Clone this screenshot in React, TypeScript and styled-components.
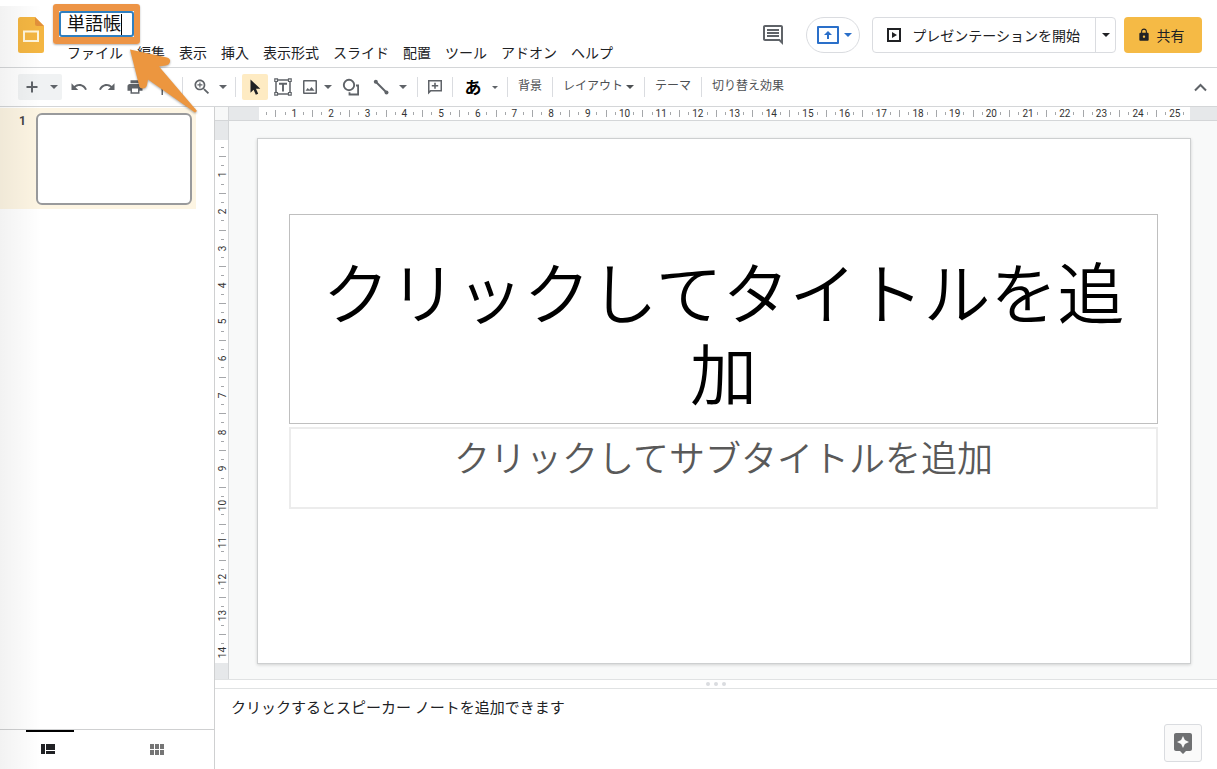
import React from 'react';
import styled, { createGlobalStyle, css } from 'styled-components';

const GlobalStyle = createGlobalStyle`
  *, *::before, *::after { box-sizing: border-box; }
  body {
    margin: 0;
    background: #fff;
    color: #202124;
    font-family: Roboto, "Noto Sans CJK JP", sans-serif;
    font-size: 14px;
  }
  button, input, textarea {
    font: inherit;
    color: inherit;
    border: 0;
    padding: 0;
    margin: 0;
    background: none;
    outline: 0;
  }
  svg { display: block; flex: none; }
`;

const line = '#d4d6d8';
const iconGrey = '#5f6368';

/* ---------- page frame ---------- */

const Page = styled.div`
  position: relative;
  display: flex;
  flex-direction: column;
  height: 100vh;
  min-height: 480px;
  overflow: hidden;
`;

const EdgeShade = styled.div`
  position: absolute;
  z-index: 5;
  top: 6px;
  bottom: 0;
  left: 0;
  width: 42px;
  pointer-events: none;
  background: linear-gradient(to right, rgba(0, 0, 0, 0.05), rgba(0, 0, 0, 0));
`;

/* ---------- header ---------- */

const Header = styled.header`
  position: relative;
  z-index: 3;
  display: flex;
  align-items: flex-start;
  height: 68px;
  padding: 0 15px 0 18px;
  border-bottom: 1px solid ${line};
`;

const Logo = styled.a`
  margin: 17px 15px 0 0;
`;

const TitleColumn = styled.div`
  padding-top: 11px;
`;

const TitleBox = styled.div`
  position: relative;
  z-index: 2;
  display: inline-flex;
  align-items: center;
  height: 26px;
  padding: 0 10px 0 6px;
  border: 2px solid #2f7fc0;
  border-radius: 3px;
  background: #fff;
  vertical-align: top;
`;

const TitleInput = styled.input`
  width: 54px;
  height: 22px;
  font-size: 18px;
  line-height: 22px;
  color: #111;
`;

const TextCaret = styled.span`
  width: 1px;
  height: 21px;
  background: #000;
`;

const Highlight = styled.span`
  position: absolute;
  inset: -9px -8px;
  border: solid #ed9445;
  border-width: 7px 6px;
  border-radius: 3px;
  box-shadow: 0 1px 2px rgba(0, 0, 0, 0.3);
`;

const Arrow = styled.svg`
  position: absolute;
  left: 63px;
  top: 31px;
  filter: drop-shadow(0 1px 1px rgba(0, 0, 0, 0.35));
`;

const MenuBar = styled.nav`
  display: flex;
  margin: 1px 0 0 1px;
`;

const MenuItem = styled.button`
  padding: 0 7px;
  height: 30px;
  line-height: 30px;
  white-space: nowrap;
`;

const HeaderActions = styled.div`
  display: flex;
  align-items: center;
  height: 36px;
  margin: 17px 0 0 auto;
`;

const CommentsButton = styled.button`
  margin-right: 21px;
  color: ${iconGrey};
`;

const UploadPill = styled.button`
  display: flex;
  align-items: center;
  justify-content: center;
  gap: 5px;
  width: 54px;
  height: 36px;
  margin-right: 12px;
  padding-left: 3px;
  border: 1px solid #dadce0;
  border-radius: 18px;
  color: #2a6fc9;
`;

const PresentGroup = styled.div`
  display: flex;
  height: 36px;
  margin-right: 8px;
  border: 1px solid #dadce0;
  border-radius: 4px;
`;

const PresentButton = styled.button`
  display: flex;
  align-items: center;
  gap: 10px;
  padding: 0 15px 1px 13px;
  white-space: nowrap;
`;

const PresentMenu = styled.button`
  display: flex;
  align-items: center;
  justify-content: center;
  width: 20px;
  border-left: 1px solid #dadce0;
`;

const ShareButton = styled.button`
  display: flex;
  align-items: center;
  justify-content: center;
  gap: 6px;
  width: 78px;
  height: 36px;
  padding: 0 5px 1px 0;
  border-radius: 4px;
  background: #f5ba45;
`;

/* ---------- toolbar ---------- */

const Toolbar = styled.div`
  display: flex;
  align-items: center;
  height: 39px;
  padding: 0 3px 0 18px;
  border-bottom: 1px solid ${line};
  color: ${iconGrey};
  font-size: 12px;
`;

const NewSlide = styled.div`
  display: flex;
  width: 44px;
  height: 26px;
  margin-right: 3px;
  border-radius: 2px;
  background: #f0f2f3;
`;

const Tool = styled.button<{ $w?: number; $active?: boolean; $end?: boolean }>`
  display: flex;
  align-items: center;
  justify-content: center;
  flex: none;
  width: ${(p) => p.$w ?? 28}px;
  height: 26px;
  ${(p) => p.$end && css`margin-left: auto;`}
  ${(p) =>
    p.$active &&
    css`
      width: 26px;
      margin: 0 1px;
      border-radius: 2px;
      background: #feebc3;
      color: #202124;
    `}
`;

const InputMode = styled.span`
  padding-top: 2px;
  font-size: 17px;
  font-weight: 700;
  line-height: 24px;
  color: #000;
`;

const TextTool = styled.button`
  display: flex;
  align-items: center;
  gap: 3px;
  height: 26px;
  padding: 0 5px;
  line-height: 20px;
  white-space: nowrap;
  color: #4d5053;
`;

const TextToolLabel = styled.span`
  padding-bottom: 2px;
`;

const Divider = styled.span`
  flex: none;
  width: 1px;
  height: 20px;
  margin: 0 5px;
  background: #dadce0;
`;

/* ---------- workspace ---------- */

const Workspace = styled.div`
  display: flex;
  flex: 1;
  min-height: 0;
`;

const Sidebar = styled.aside`
  display: flex;
  flex-direction: column;
  flex: none;
  width: 215px;
  border-right: 1px solid #cfd0d1;
`;

const Filmstrip = styled.ol`
  flex: 1;
  margin: 0;
  padding: 1px 0 0;
  list-style: none;
`;

const SlideEntry = styled.li`
  display: flex;
  width: 196px;
  padding: 5px 4px 4px 0;
  background: #fdf5e3;
`;

const SlideNumber = styled.span`
  width: 36px;
  padding-right: 10px;
  font-size: 12px;
  font-weight: 700;
  line-height: 16px;
  text-align: right;
  color: #444;
`;

const Thumbnail = styled.button`
  flex: 1;
  height: 92px;
  border: 2px solid #999a9c;
  border-radius: 6px;
  background: #fff;
`;

const ViewTabs = styled.div`
  display: flex;
  gap: 61px;
  height: 40px;
  padding-left: 26px;
  border-top: 1px solid #cfd0d1;
`;

const ViewTab = styled.button<{ $selected?: boolean }>`
  display: flex;
  justify-content: center;
  align-items: center;
  width: 48px;
  height: 39px;
  padding: 0 4px 3px 0;
  border-top: 2px solid ${(p) => (p.$selected ? '#000' : 'transparent')};
  color: ${(p) => (p.$selected ? '#202124' : '#757575')};
`;

const Editor = styled.main`
  display: grid;
  grid-template: 14px minmax(0, 1fr) auto / 14px minmax(0, 1fr);
  flex: 1;
  min-width: 0;
`;

const Corner = styled.div`
  border-right: 1px solid ${line};
  border-bottom: 1px solid ${line};
  background: #f7f8f8;
`;

const HorizontalRuler = styled.div`
  display: flex;
  padding: 0 27px 0 30px;
  border-bottom: 1px solid ${line};
  background: #e6e8ea;
`;

const VerticalRuler = styled.div`
  display: flex;
  padding: 19px 0 16px;
  border-right: 1px solid ${line};
  background: #e6e8ea;
`;

const Scale = styled.div<{ $vertical?: boolean }>`
  display: flex;
  flex: 1;
  flex-direction: ${(p) => (p.$vertical ? 'column' : 'row')};
  min-width: 0;
  min-height: 0;
  padding-left: ${(p) => (p.$vertical ? 2 : 0)}px;
  background: #fff;
  font-size: 10px;
  line-height: 13px;
  color: #333;
`;

const Slot = styled.span<{ $grow?: number }>`
  display: flex;
  align-items: center;
  justify-content: center;
  flex: ${(p) => p.$grow ?? 1} 1 0;
  min-width: 0;
  min-height: 0;
`;

const Tick = styled.i<{ $vertical?: boolean; $long?: boolean }>`
  flex: none;
  width: ${(p) => (p.$vertical ? (p.$long ? 7 : 3) : 1)}px;
  height: ${(p) => (p.$vertical ? 1 : p.$long ? 7 : 3)}px;
  background: #a5a7aa;
`;

const RulerLabel = styled.span<{ $vertical?: boolean }>`
  flex: none;
  ${(p) => p.$vertical && css`transform: rotate(-90deg);`}
`;

const Canvas = styled.section`
  display: flex;
  padding: 17px 26px 15px 28px;
  background: #f8f9f9;
`;

const Slide = styled.div`
  display: flex;
  flex-direction: column;
  flex: 1;
  gap: 3px;
  min-width: 0;
  padding: 75px 32px 0 31px;
  border: 1px solid #cdcfd0;
  background: #fff;
  box-shadow: 0 1px 3px rgba(0, 0, 0, 0.16);
`;

const TitleHolder = styled.div`
  display: flex;
  align-items: flex-end;
  justify-content: center;
  height: 210px;
  padding: 0 30px 12px;
  border: 1px solid #bfbfbf;
`;

const SlideTitle = styled.h1`
  margin: 0;
  font-size: 67px;
  font-weight: 350;
  font-family: "Noto Sans CJK JP", sans-serif;
  line-height: 81px;
  text-align: center;
  color: #000;
`;

const SubtitleHolder = styled.div`
  height: 82px;
  padding-top: 5px;
  border: 2px solid #ececec;
`;

const SlideSubtitle = styled.p`
  margin: 0;
  font-size: 36px;
  font-weight: 350;
  font-family: "Noto Sans CJK JP", sans-serif;
  line-height: 44px;
  text-align: center;
  color: #595959;
`;

const NotesPanel = styled.section`
  grid-column: 1 / -1;
`;

const Splitter = styled.div`
  display: flex;
  align-items: center;
  justify-content: center;
  gap: 4px;
  height: 10px;
  border-top: 1px solid #e0e2e3;
  border-bottom: 1px solid #e0e2e3;
`;

const GripDot = styled.i`
  width: 4px;
  height: 4px;
  border-radius: 2px;
  background: #dadce0;
`;

const NotesRow = styled.div`
  display: flex;
  align-items: flex-end;
  height: 80px;
  padding: 0 15px 7px 16px;
`;

const Notes = styled.textarea`
  display: block;
  flex: 1;
  height: 65px;
  resize: none;
  overflow: hidden;
  font-size: 15px;
  line-height: 22px;
  color: #202124;
`;

const ExploreButton = styled.button`
  display: flex;
  align-items: center;
  justify-content: center;
  width: 38px;
  height: 38px;
  border: 1px solid #dadce0;
  border-radius: 3px;
  background: #fafafa;
  color: #6f7072;
`;

/* ---------- icons ---------- */

const Glyph = ({ d, size = 24, box = 24 }: { d: string; size?: number; box?: number }) => (
  <svg width={size} height={size} viewBox={`0 0 ${box} ${box}`} fill="currentColor" aria-hidden="true">
    <path fillRule="evenodd" d={d} />
  </svg>
);

const Down = ({ w = 8 }: { w?: number }) => (
  <svg width={w} height={w / 2} viewBox="0 0 8 4" fill="currentColor" aria-hidden="true">
    <path d="M0 0h8L4 4z" />
  </svg>
);

const paths = {
  plus: 'M8 3.5h2V8h4.5v2H10v4.500H8V10H3.500V8H8z',
  undo: 'M12.5 8c-2.65 0-5.05.99-6.9 2.6L2 7v9h9l-3.62-3.62c1.39-1.16 3.16-1.88 5.12-1.88 3.54 0 6.55 2.31 7.6 5.5l2.37-.78C21.08 11.03 17.15 8 12.5 8z',
  redo: 'M18.4 10.6C16.55 8.99 14.15 8 11.5 8c-4.65 0-8.58 3.03-9.96 7.22L3.9 16c1.05-3.19 4.05-5.5 7.6-5.5 1.95 0 3.73.72 5.12 1.88L13 16h9V7l-3.6 3.6z',
  print: 'M19 8H5c-1.66 0-3 1.34-3 3v6h4v4h12v-4h4v-6c0-1.66-1.34-3-3-3zm-3 11H8v-5h8v5zm3-7c-.55 0-1-.45-1-1s.45-1 1-1 1 .45 1 1-.45 1-1 1zm-1-9H6v4h12V3z',
  zoom: 'M15.5 14h-.79l-.28-.27C15.41 12.59 16 11.11 16 9.5 16 5.91 13.09 3 9.5 3S3 5.91 3 9.5 5.91 16 9.5 16c1.61 0 3.09-.59 4.23-1.57l.27.28v.79l5 4.99L20.49 19l-4.99-5zm-6 0C7.01 14 5 11.99 5 9.5S7.01 5 9.5 5 14 7.01 14 9.5 11.99 14 9.5 14zM12.5 10.2h-2.3v2.3H8.8v-2.3H6.5V8.8h2.3V6.5h1.4v2.3h2.3z',
  pointer: 'M4.5 1.5v13.2l3.1-3 2.2 5 2.4-1-2.2-5h4.3z',
  comments: 'M21.99 4c0-1.1-.89-2-1.99-2H4c-1.1 0-2 .9-2 2v12c0 1.1.9 2 2 2h14l4 4-.01-18zM20 4v13.17L18.83 16H4V4h16zM6 12h12v2H6zM6 9h12v2H6zM6 6h12v2H6z',
  lock: 'M18 8h-1V6c0-2.76-2.24-5-5-5S7 3.24 7 6v2H6c-1.1 0-2 .9-2 2v10c0 1.1.9 2 2 2h12c1.1 0 2-.9 2-2V10c0-1.1-.9-2-2-2zm-6 9c-1.1 0-2-.9-2-2s.9-2 2-2 2 .9 2 2-.9 2-2 2zm3.1-9H8.9V6c0-1.71 1.39-3.1 3.1-3.1 1.71 0 3.1 1.39 3.1 3.1v2z',
  image: 'M3 2h12a1 1 0 0 1 1 1v12a1 1 0 0 1-1 1H3a1 1 0 0 1-1-1V3a1 1 0 0 1 1-1zm.5 1.5v11h11v-11zM4.5 12.8l2.2-2.9 1.6 1.9 2.2-2.9 3 3.9z',
  addComment: 'M2 2h14v11.5H5L2 16.5zM3.5 3.5v9.2l.8-.7h10.2V3.5zM8.2 4.7h1.6v2.3h2.4v1.5H9.8v2.3H8.2V8.5H5.8V7h2.4z',
  present: 'M1 1h14v14H1zM3 3v10h10V3zM6 5l5 3-5 3z',
  upload: 'M1 0h20a1 1 0 0 1 1 1v16a1 1 0 0 1-1 1H1a1 1 0 0 1-1-1V1a1 1 0 0 1 1-1zM2 2v14h18V2zM11 5l4 4h-3v4h-2V9H7z',
  explore: 'M19 2H5c-1.1 0-2 .9-2 2v14c0 1.1.9 2 2 2h4l3 3 3-3h4c1.1 0 2-.9 2-2V4c0-1.1-.9-2-2-2zm-5.12 10.88L12 17l-1.88-4.12L6 11l4.12-1.88L12 5l1.88 4.12L18 11l-4.12 1.88z',
};

const SlidesLogo = () => (
  <svg width="26" height="36" viewBox="0 0 26 36" aria-hidden="true">
    <path d="M2.5 0H17l9 9v24.5a2.5 2.5 0 0 1-2.5 2.5h-21A2.5 2.5 0 0 1 0 33.5v-31A2.5 2.5 0 0 1 2.5 0z" fill="#f4b642" />
    <path d="M17 0l9 9h-7a2 2 0 0 1-2-2z" fill="#e2903a" />
    <path d="M6 14.5h14v9.5H6z" fill="none" stroke="#fff6dc" strokeWidth="2" />
  </svg>
);

const TextBoxIcon = () => (
  <svg width="18" height="18" viewBox="0 0 18 18" fill="none" stroke="currentColor" aria-hidden="true">
    <path d="M4 2h10M4 16h10M2 4v10M16 4v10" strokeWidth="1.5" />
    <path d="M.8.8h2.7v2.7H.8zM14.5.8h2.7v2.7h-2.7zM.8 14.5h2.7v2.7H.8zM14.5 14.5h2.7v2.7h-2.7z" strokeWidth="1.2" />
    <path d="M5 5.7h8M9 5.7v7.8" strokeWidth="1.9" />
  </svg>
);

const ShapeIcon = () => (
  <svg width="18" height="18" viewBox="0 0 18 18" fill="none" stroke="currentColor" aria-hidden="true">
    <circle cx="7" cy="7" r="5.2" strokeWidth="1.9" />
    <path d="M14 7.5h2.1v9H7.5v-2.3" strokeWidth="1.8" />
  </svg>
);

const LineIcon = () => (
  <svg width="18" height="18" viewBox="0 0 18 18" aria-hidden="true">
    <path d="M4 4l10.5 10.5" stroke="currentColor" strokeWidth="2" />
    <circle cx="3.8" cy="3.8" r="2" fill="currentColor" />
    <circle cx="14.5" cy="14.5" r="2" fill="currentColor" />
  </svg>
);

const PaintIcon = () => (
  <svg width="18" height="18" viewBox="0 0 18 18" fill="currentColor" aria-hidden="true">
    <path d="M3 2h9v4H3zM13 3.5h2.5V9H8.8v2H7.5V7.8h6.7V4.7H13zM7.5 11H9v6H7.500z" />
  </svg>
);

const FilmstripIcon = () => (
  <svg width="14" height="10" viewBox="0 0 14 10" fill="currentColor" aria-hidden="true">
    <path d="M0 0h4v10H0zM5 0h9v6H5zM5 7h9v3H5z" />
  </svg>
);

const GridIcon = () => (
  <svg width="14" height="11" viewBox="0 0 14 11" fill="currentColor" aria-hidden="true">
    <path d="M0 0h4v5H0zM5 0h4v5H5zM10 0h4v5h-4zM0 6h4v5H0zM5 6h4v5H5zM10 6h4v5h-4z" />
  </svg>
);

const ChevronUp = () => (
  <svg width="13" height="9" viewBox="0 0 13 9" fill="none" aria-hidden="true">
    <path d="M1 7.5L6.5 2 12 7.5" stroke="currentColor" strokeWidth="2" />
  </svg>
);

/* ---------- pieces ---------- */

interface RulerScaleProps {
  slots: number;
  lead: number;
  tail: number;
  vertical?: boolean;
}

/* Four slots make one centimetre; every fourth one carries its number. */
const RulerScale = ({ slots, lead, tail, vertical }: RulerScaleProps) => (
  <Scale $vertical={vertical} aria-hidden="true">
    <Slot $grow={lead} />
    {Array.from({ length: slots }, (_, i) => i + 1).map((n) => (
      <Slot key={n}>
        {n % 4 === 0 ? (
          <RulerLabel $vertical={vertical}>{n / 4}</RulerLabel>
        ) : (
          <Tick $vertical={vertical} $long={n % 4 === 2} />
        )}
      </Slot>
    ))}
    <Slot $grow={tail} />
  </Scale>
);

const menus = ['ファイル', '編集', '表示', '挿入', '表示形式', 'スライド', '配置', 'ツール', 'アドオン', 'ヘルプ'];

export default function App() {
  return (
    <Page>
      <GlobalStyle />
      <Header>
        <Logo href="#" aria-label="スライド ホーム">
          <SlidesLogo />
        </Logo>
        <TitleColumn>
          <TitleBox>
            <TitleInput aria-label="名前を変更" defaultValue="単語帳" />
            <TextCaret />
            <Highlight />
            <Arrow width="80" height="76" viewBox="0 0 80 76" aria-hidden="true">
              <path
                d="M6 5.5L43 13.5Q47 15 46 18Q45 21 41.5 21.5L35 22.5L73 67L71 68.5L24 35.5L23 41Q22 44.5 18.5 44.5Q15.5 44.5 15 41Z"
                fill="#ec963f"
              />
            </Arrow>
          </TitleBox>
          <MenuBar>
            {menus.map((m) => (
              <MenuItem key={m}>{m}</MenuItem>
            ))}
          </MenuBar>
        </TitleColumn>
        <HeaderActions>
          <CommentsButton aria-label="コメント履歴を開く">
            <Glyph d={paths.comments} />
          </CommentsButton>
          <UploadPill aria-label="会議で画面を共有">
            <svg width="22" height="18" viewBox="0 0 22 18" fill="currentColor" aria-hidden="true">
              <path fillRule="evenodd" d={paths.upload} />
            </svg>
            <Down />
          </UploadPill>
          <PresentGroup>
            <PresentButton>
              <Glyph d={paths.present} size={16} box={16} />
              プレゼンテーションを開始
            </PresentButton>
            <PresentMenu aria-label="プレゼンテーションのオプション">
              <Down />
            </PresentMenu>
          </PresentGroup>
          <ShareButton>
            <Glyph d={paths.lock} size={14} />
            共有
          </ShareButton>
        </HeaderActions>
      </Header>

      <Toolbar role="toolbar">
        <NewSlide>
          <Tool aria-label="新しいスライド">
            <Glyph d={paths.plus} size={18} box={18} />
          </Tool>
          <Tool $w={16} aria-label="レイアウトを選んで追加">
            <Down />
          </Tool>
        </NewSlide>
        <Tool aria-label="元に戻す"><Glyph d={paths.undo} size={18} /></Tool>
        <Tool aria-label="やり直し"><Glyph d={paths.redo} size={18} /></Tool>
        <Tool aria-label="印刷"><Glyph d={paths.print} size={18} /></Tool>
        <Tool aria-label="書式を貼り付け"><PaintIcon /></Tool>
        <Divider />
        <Tool aria-label="ズーム"><Glyph d={paths.zoom} size={20} /></Tool>
        <Tool $w={14} aria-label="ズームの倍率"><Down /></Tool>
        <Divider />
        <Tool $active aria-label="選択"><Glyph d={paths.pointer} size={18} box={18} /></Tool>
        <Tool aria-label="テキスト ボックス"><TextBoxIcon /></Tool>
        <Tool $w={26} aria-label="画像を挿入"><Glyph d={paths.image} size={18} box={18} /></Tool>
        <Tool $w={10} aria-label="画像のオプション"><Down /></Tool>
        <Tool $w={36} aria-label="図形"><ShapeIcon /></Tool>
        <Tool $w={24} aria-label="線"><LineIcon /></Tool>
        <Tool $w={19} aria-label="線の種類"><Down /></Tool>
        <Divider />
        <Tool $w={24} aria-label="コメントを追加"><Glyph d={paths.addComment} size={18} box={18} /></Tool>
        <Divider />
        <Tool $w={30} aria-label="入力ツール"><InputMode>あ</InputMode></Tool>
        <Tool $w={14} aria-label="入力ツールを選択"><Down w={6} /></Tool>
        <Divider />
        <TextTool><TextToolLabel>背景</TextToolLabel></TextTool>
        <Divider />
        <TextTool><TextToolLabel>レイアウト</TextToolLabel><Down /></TextTool>
        <Divider />
        <TextTool><TextToolLabel>テーマ</TextToolLabel></TextTool>
        <Divider />
        <TextTool><TextToolLabel>切り替え効果</TextToolLabel></TextTool>
        <Tool $end aria-label="メニューを非表示"><ChevronUp /></Tool>
      </Toolbar>

      <Workspace>
        <Sidebar>
          <Filmstrip>
            <SlideEntry>
              <SlideNumber>1</SlideNumber>
              <Thumbnail aria-label="スライド 1" />
            </SlideEntry>
          </Filmstrip>
          <ViewTabs>
            <ViewTab $selected aria-label="フィルムストリップ表示"><FilmstripIcon /></ViewTab>
            <ViewTab aria-label="グリッド表示"><GridIcon /></ViewTab>
          </ViewTabs>
        </Sidebar>

        <Editor>
          <Corner />
          <HorizontalRuler>
            <RulerScale slots={101} lead={0.35} tail={0.2} />
          </HorizontalRuler>
          <VerticalRuler>
            <RulerScale slots={56} lead={0.3} tail={0.65} vertical />
          </VerticalRuler>
          <Canvas>
            <Slide>
              <TitleHolder>
                <SlideTitle>クリックしてタイトルを追加</SlideTitle>
              </TitleHolder>
              <SubtitleHolder>
                <SlideSubtitle>クリックしてサブタイトルを追加</SlideSubtitle>
              </SubtitleHolder>
            </Slide>
          </Canvas>
          <NotesPanel>
            <Splitter>
              <GripDot />
              <GripDot />
              <GripDot />
            </Splitter>
            <NotesRow>
              <Notes aria-label="スピーカー ノート" defaultValue="クリックするとスピーカー ノートを追加できます" />
              <ExploreButton aria-label="データ探索">
                <Glyph d={paths.explore} />
              </ExploreButton>
            </NotesRow>
          </NotesPanel>
        </Editor>
      </Workspace>
      <EdgeShade />
    </Page>
  );
}
